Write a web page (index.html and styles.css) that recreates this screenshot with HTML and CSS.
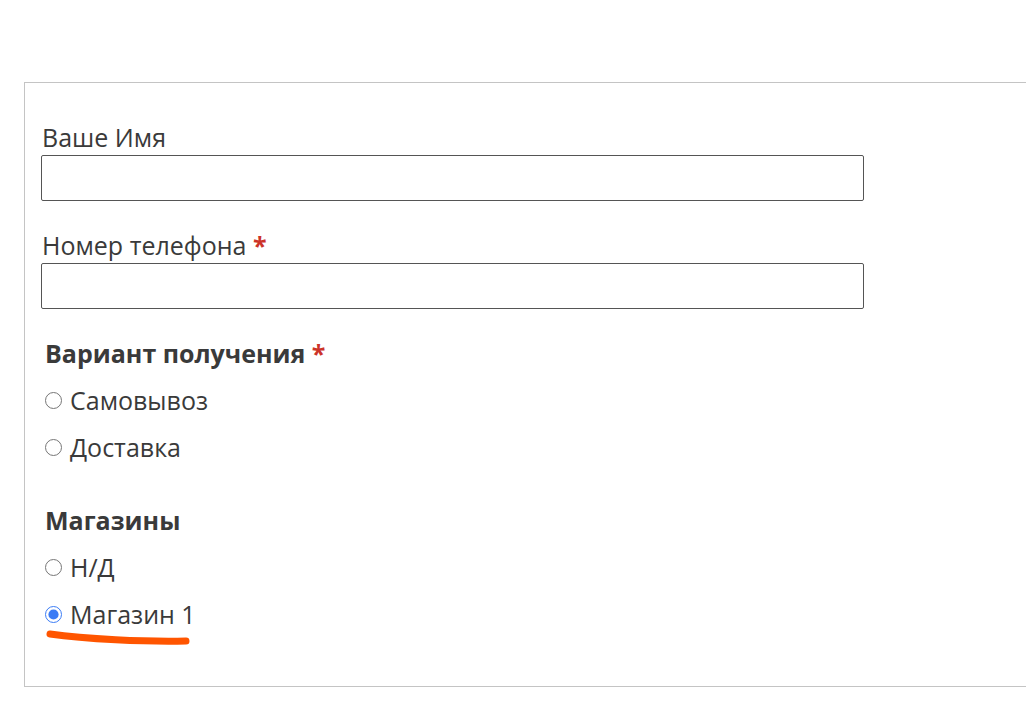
FILE: index.html
```html
<!DOCTYPE html>
<html lang="ru">
  <head>
    <meta charset="UTF-8" />
    <meta name="viewport" content="width=device-width, initial-scale=1.0" />
    <title>Заказ</title>
    <link rel="stylesheet" href="styles.css">
  </head>
  <body>
    <form class="order-form">
      <div class="field">
        <label for="name">Ваше Имя</label>
        <input type="text" id="name" />
      </div>

      <div class="field">
        <label for="phone">Номер телефона <span class="required">*</span></label>
        <input type="tel" id="phone" />
      </div>

      <div class="choice-group">
        <p class="group-title">Вариант получения <span class="required">*</span></p>
        <label class="choice"><input type="radio" name="delivery" /> Самовывоз</label>
        <label class="choice"><input type="radio" name="delivery" /> Доставка</label>
      </div>

      <div class="choice-group">
        <p class="group-title">Магазины</p>
        <label class="choice"><input type="radio" name="shop" /> Н/Д</label>
        <label class="choice">
          <input type="radio" name="shop" checked /> Магазин 1
          <!-- hand-drawn highlight -->
          <svg class="scribble" width="150" height="20" viewBox="0 0 150 20">
            <path d="M5 4 C40 9, 100 12, 141 11" />
          </svg>
        </label>
      </div>
    </form>
  </body>
</html>
```

FILE: styles.css
```css
body {
  font-family: "Open Sans", "Noto Sans", sans-serif;
  background-color: #fff;
  color: #3a3a3a;
  margin: 0;
  padding: 0;
}

.order-form {
  box-sizing: border-box;
  margin: 82px 0 0 24px;
  height: 605px;
  padding: 38px 0 0 16px;
  border: 1px solid #c4c4c4;
  border-right: 0;
}

.field label {
  display: block;
  font-size: 25px;
  line-height: 32px;
  margin-bottom: 2px;
  padding-left: 1px;
}

.field input {
  display: block;
  width: 823px;
  height: 46px;
  box-sizing: border-box;
  border: 1px solid #555;
  border-radius: 2px;
  margin: 0;
}

.field + .field {
  margin-top: 28px;
}

.required {
  color: #cc3329;
  font-weight: bold;
}

.choice-group {
  margin-top: 28px;
  padding-left: 4px;
}

.choice-group + .choice-group {
  margin-top: 41px;
}

.group-title {
  margin: 0 0 15px;
  font-size: 25px;
  font-weight: bold;
  line-height: 32px;
}

.choice {
  display: flex;
  align-items: center;
  gap: 8px;
  font-size: 25px;
  line-height: 32px;
  margin-bottom: 15px;
  position: relative;
}

.choice input {
  width: 17px;
  height: 17px;
  margin: 0;
  accent-color: #3b7cf5;
}

.scribble {
  position: absolute;
  left: 0;
  top: 32px;
}

.scribble path {
  fill: none;
  stroke: #ff5500;
  stroke-width: 7;
  stroke-linecap: round;
}
```
